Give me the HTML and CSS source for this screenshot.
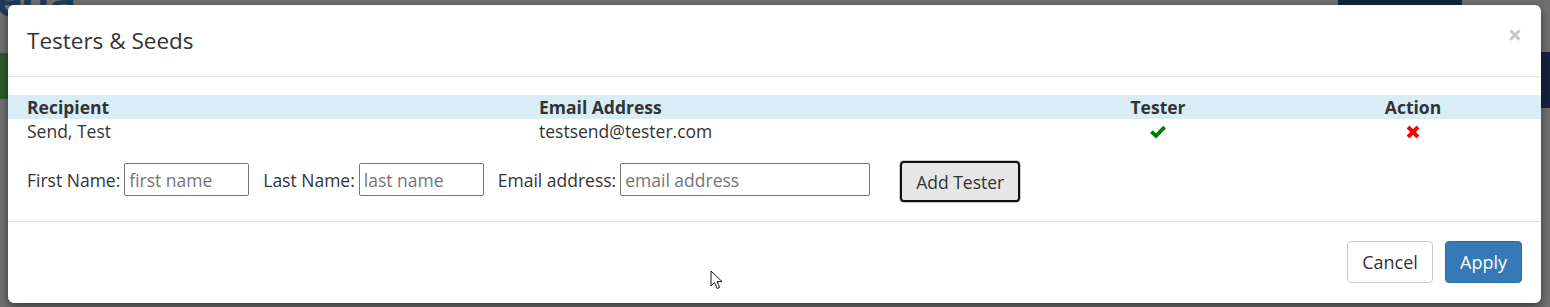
FILE: index.html
```html
<!DOCTYPE html>
<html>
<head>
<meta charset="utf-8">
<link rel="stylesheet" href="styles.css">
</head>
<body>
<div class="page">
  <div class="page-logo">eda</div>
  <div class="page-green"></div>
  <div class="page-navy"></div>
  <div class="page-navy2"></div>
</div>
<div class="modal">
  <div class="modal-header">
    <h4 class="modal-title">Testers &amp; Seeds</h4>
    <span class="close">×</span>
  </div>
  <div class="modal-body">
    <table class="testers">
      <colgroup>
        <col class="w-name">
        <col class="w-email">
        <col class="w-tester">
        <col class="w-action">
      </colgroup>
      <thead>
        <tr>
          <th>Recipient</th>
          <th>Email Address</th>
          <th class="c-center">Tester</th>
          <th class="c-center">Action</th>
        </tr>
      </thead>
      <tbody>
        <tr>
          <td>Send, Test</td>
          <td>testsend@tester.com</td>
          <td class="c-center">
            <svg class="ico" width="18" height="16" viewBox="0 0 18 16"><path d="M1 9 L3.8 6.2 L7 9.3 L14.2 1.8 L17 4.6 L7 14.6 Z" fill="#008000"/></svg>
          </td>
          <td class="c-center">
            <svg class="ico" width="16" height="16" viewBox="0 0 16 16"><path d="M1.6 4.4 L4.4 1.6 L8 5.2 L11.6 1.6 L14.4 4.4 L10.8 8 L14.4 11.6 L11.6 14.4 L8 10.8 L4.4 14.4 L1.6 11.6 L5.2 8 Z" fill="#ff0000"/></svg>
          </td>
        </tr>
      </tbody>
    </table>
    <div class="add-form">
      <label class="lbl">First Name:</label>
      <input class="inp inp-sm" type="text" placeholder="first name">
      <label class="lbl">Last Name:</label>
      <input class="inp inp-sm" type="text" placeholder="last name">
      <label class="lbl">Email address:</label>
      <input class="inp inp-lg" type="text" placeholder="email address">
      <button class="add-btn">Add Tester</button>
    </div>
  </div>
  <div class="modal-footer">
    <button class="btn btn-default">Cancel</button>
    <button class="btn btn-primary">Apply</button>
  </div>
</div>
<svg class="cursor" width="14" height="22" viewBox="0 0 14 22"><path d="M1 1 L1 16 L4.5 12.5 L7.2 18.5 L9.6 17.4 L7 11.6 L12 11.6 Z" fill="#fff" stroke="#111" stroke-width="1" stroke-linejoin="round"/></svg>
</body>
</html>
```
FILE: styles.css
```css
html, body {
  margin: 0;
  padding: 0;
}
body {
  width: 1550px;
  height: 307px;
  overflow: hidden;
  background: #6e6e6e;
  font-family: "Open Sans", "Noto Sans", sans-serif;
  color: #333;
  position: relative;
}
.page {
  position: relative;
  width: 1550px;
  height: 307px;
  background: #707070;
}
.page-logo {
  position: absolute;
  left: -4px;
  top: -16px;
  height: 30px;
  line-height: 30px;
  font-size: 44px;
  font-weight: bold;
  color: #1f3a5a;
}
.page-green {
  position: absolute;
  left: 0;
  top: 53px;
  width: 10px;
  height: 46px;
  background: #2f5a2a;
}
.page-navy {
  position: absolute;
  left: 1338px;
  top: 0;
  width: 124px;
  height: 6px;
  background: #15233f;
}
.page-navy2 {
  position: absolute;
  left: 1540px;
  top: 52px;
  width: 10px;
  height: 56px;
  background: #15233f;
}
.modal {
  position: absolute;
  left: 8px;
  top: 5px;
  width: 1533px;
  height: 298px;
  background: #fff;
  border-radius: 6px;
  box-shadow: 0 3px 9px rgba(0,0,0,0.5);
  display: flex;
  flex-direction: column;
}
.modal-header {
  box-sizing: border-box;
  height: 72px;
  padding: 0 19px;
  border-bottom: 1px solid #e5e5e5;
  display: flex;
  align-items: center;
  justify-content: space-between;
}
.modal-title {
  margin: 0;
  font-size: 22.5px;
  font-weight: normal;
  color: #333;
  line-height: 1.4;
}
.close {
  font-size: 25px;
  font-weight: bold;
  color: #c8c8c8;
  line-height: 1;
  margin-right: 0;
  margin-top: -12px;
}
.modal-body {
  padding: 18px 0 19px;
}
.testers {
  width: 100%;
  border-collapse: collapse;
  table-layout: fixed;
  font-size: 17.5px;
}
.w-name { width: 512px; }
.w-email { width: 511px; }
.w-tester { width: 254px; }
.w-action { width: 256px; }
.testers th {
  background: #d9edf7;
  font-weight: bold;
  height: 24px;
  line-height: 24px;
  padding: 0 0 0 19px;
  text-align: left;
}
.testers td {
  height: 24px;
  line-height: 24px;
  padding: 0 0 0 19px;
}
.testers .c-center {
  text-align: center;
  padding: 0;
}
.ico {
  vertical-align: -2px;
}
.add-form {
  display: flex;
  align-items: center;
  margin-top: 18px;
  padding: 0 19px;
  font-size: 17.5px;
}
.lbl {
  margin-right: 4px;
  margin-top: -4px;
}
.inp {
  height: 33px;
  box-sizing: border-box;
  border: 1px solid #767676;
  border-radius: 2px;
  padding: 0 4px;
  font-family: "Open Sans", sans-serif;
  font-size: 17.5px;
  color: #333;
  margin-right: 14px;
  margin-top: -4px;
}
.inp::placeholder {
  color: #757575;
}
.inp-sm { width: 125px; }
.inp-lg { width: 250px; margin-right: 30px; }
.add-btn {
  width: 120px;
  height: 41px;
  box-sizing: border-box;
  background: #e6e6e6;
  border: 2px solid #101010;
  border-radius: 4px;
  box-shadow: 0 0 0 1px #c8c8c8;
  font-family: "Open Sans", sans-serif;
  font-size: 17.5px;
  color: #333;
  padding: 0;
}
.modal-footer {
  border-top: 1px solid #e5e5e5;
  padding: 19px;
  display: flex;
  justify-content: flex-end;
  gap: 12px;
}
.btn {
  height: 42px;
  box-sizing: border-box;
  border-radius: 4px;
  font-family: "Open Sans", sans-serif;
  font-size: 18px;
  padding: 0;
  border: 1px solid #ccc;
}
.btn-default {
  background: #fff;
  color: #333;
  width: 86px;
}
.btn-primary {
  background: #337ab7;
  border-color: #2e6da4;
  color: #fff;
  width: 77px;
}
.cursor {
  position: absolute;
  left: 710px;
  top: 270px;
}
```
